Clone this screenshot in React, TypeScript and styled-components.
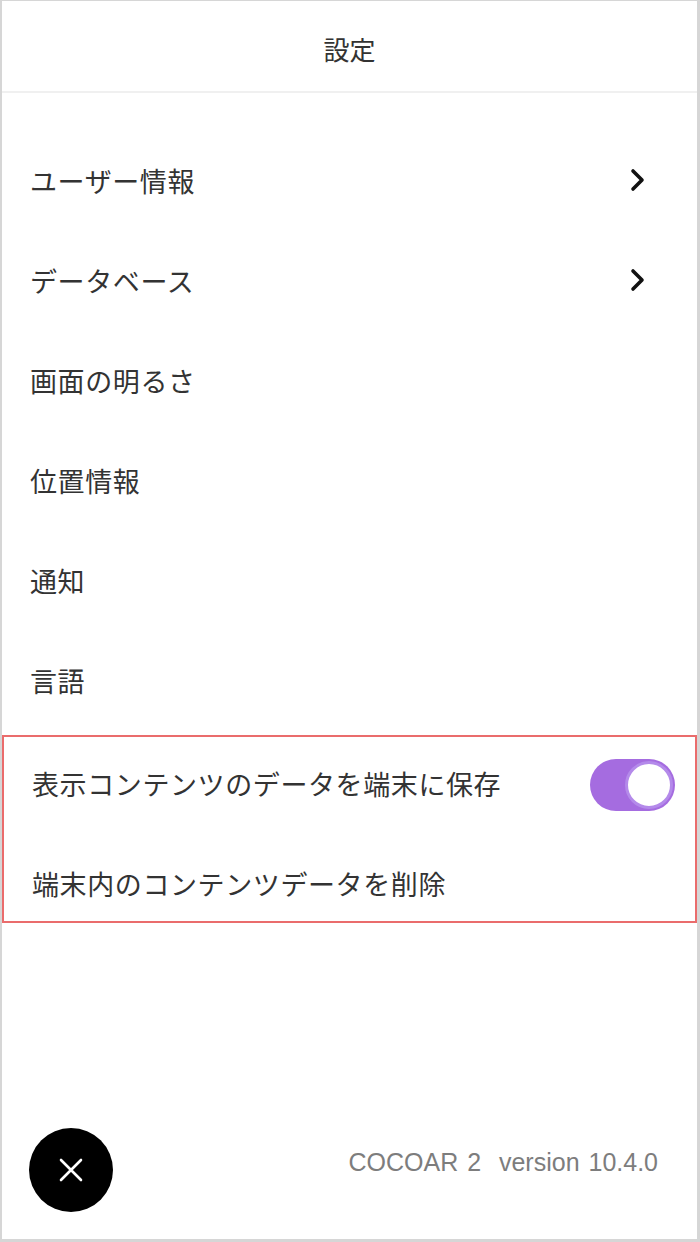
import styled, { createGlobalStyle } from "styled-components"

const GlobalStyle = createGlobalStyle`
  html, body {
    margin: 0;
    padding: 0;
    background: #ffffff;
  }
  body {
    font-family: "Noto Sans CJK JP", "Noto Sans", sans-serif;
  }
`

const Frame = styled.div`
  width: 700px;
  height: 1242px;
  box-sizing: border-box;
  border-style: solid;
  border-color: #d6d6d6;
  border-width: 1px 3px 3px 2px;
  display: flex;
  flex-direction: column;
  background: #ffffff;
`

const Header = styled.header`
  height: 92px;
  padding-top: 4px;
  box-sizing: border-box;
  border-bottom: 2px solid #f0f0f0;
  display: flex;
  align-items: center;
  justify-content: center;
  font-size: 26px;
  color: #333333;
`

const List = styled.div`
  display: flex;
  flex-direction: column;
  padding-top: 37px;
`

const Row = styled.div<{ $height?: number }>`
  height: ${p => p.$height ?? 100}px;
  display: flex;
  align-items: center;
  justify-content: space-between;
  padding: 0 20px 0 28px;
  font-size: 27px;
  letter-spacing: 0.6px;
  color: #333333;
`

const Highlight = styled.div`
  margin-top: 5px;
  border: 2px solid #ea6c6c;
  padding: 11px 0 3px;
  display: flex;
  flex-direction: column;
  gap: 30px;
`

const Chevron = styled.svg`
  width: 16px;
  height: 24px;
  margin-right: 31px;
`

const Track = styled.div`
  width: 85px;
  height: 52px;
  box-sizing: border-box;
  border-radius: 26px;
  background: #a56ce0;
  padding: 2px;
  display: flex;
  justify-content: flex-end;
  margin-top: 4px;
`

const Knob = styled.div`
  width: 48px;
  height: 48px;
  box-sizing: border-box;
  border-radius: 50%;
  background: #ffffff;
  border: 3px solid #b48aea;
`

const Footer = styled.footer`
  margin-top: auto;
  display: flex;
  align-items: center;
  justify-content: space-between;
  padding: 0 39px 27px 27px;
`

const CloseButton = styled.button`
  width: 84px;
  height: 84px;
  border-radius: 50%;
  border: none;
  background: #000000;
  display: flex;
  align-items: center;
  justify-content: center;
  padding: 0;
  cursor: pointer;
`

const Version = styled.span`
  font-family: "Liberation Sans", Arial, sans-serif;
  font-size: 25px;
  color: #7d7d7d;
  margin-bottom: 16px;
  word-spacing: 2px;
`

function ChevronIcon() {
  return (
    <Chevron viewBox="0 0 16 24">
      <polyline points="3,3 12,12 3,21" fill="none" stroke="#111" strokeWidth="3.6" strokeLinecap="round" strokeLinejoin="round" />
    </Chevron>
  )
}

export default function App() {
  return (
    <>
      <GlobalStyle />
      <Frame>
        <Header>設定</Header>
        <List>
          <Row>ユーザー情報<ChevronIcon /></Row>
          <Row>データベース<ChevronIcon /></Row>
          <Row>画面の明るさ</Row>
          <Row>位置情報</Row>
          <Row>通知</Row>
          <Row>言語</Row>
          <Highlight>
            <Row $height={70}>
              表示コンテンツのデータを端末に保存
              <Track><Knob /></Track>
            </Row>
            <Row $height={70}>端末内のコンテンツデータを削除</Row>
          </Highlight>
        </List>
        <Footer>
          <CloseButton aria-label="close">
            <svg width="26" height="26" viewBox="0 0 26 26">
              <path d="M3 3 L23 23 M23 3 L3 23" stroke="#fff" strokeWidth="2.6" strokeLinecap="round" />
            </svg>
          </CloseButton>
          <Version>COCOAR 2&nbsp; version 10.4.0</Version>
        </Footer>
      </Frame>
    </>
  )
}
